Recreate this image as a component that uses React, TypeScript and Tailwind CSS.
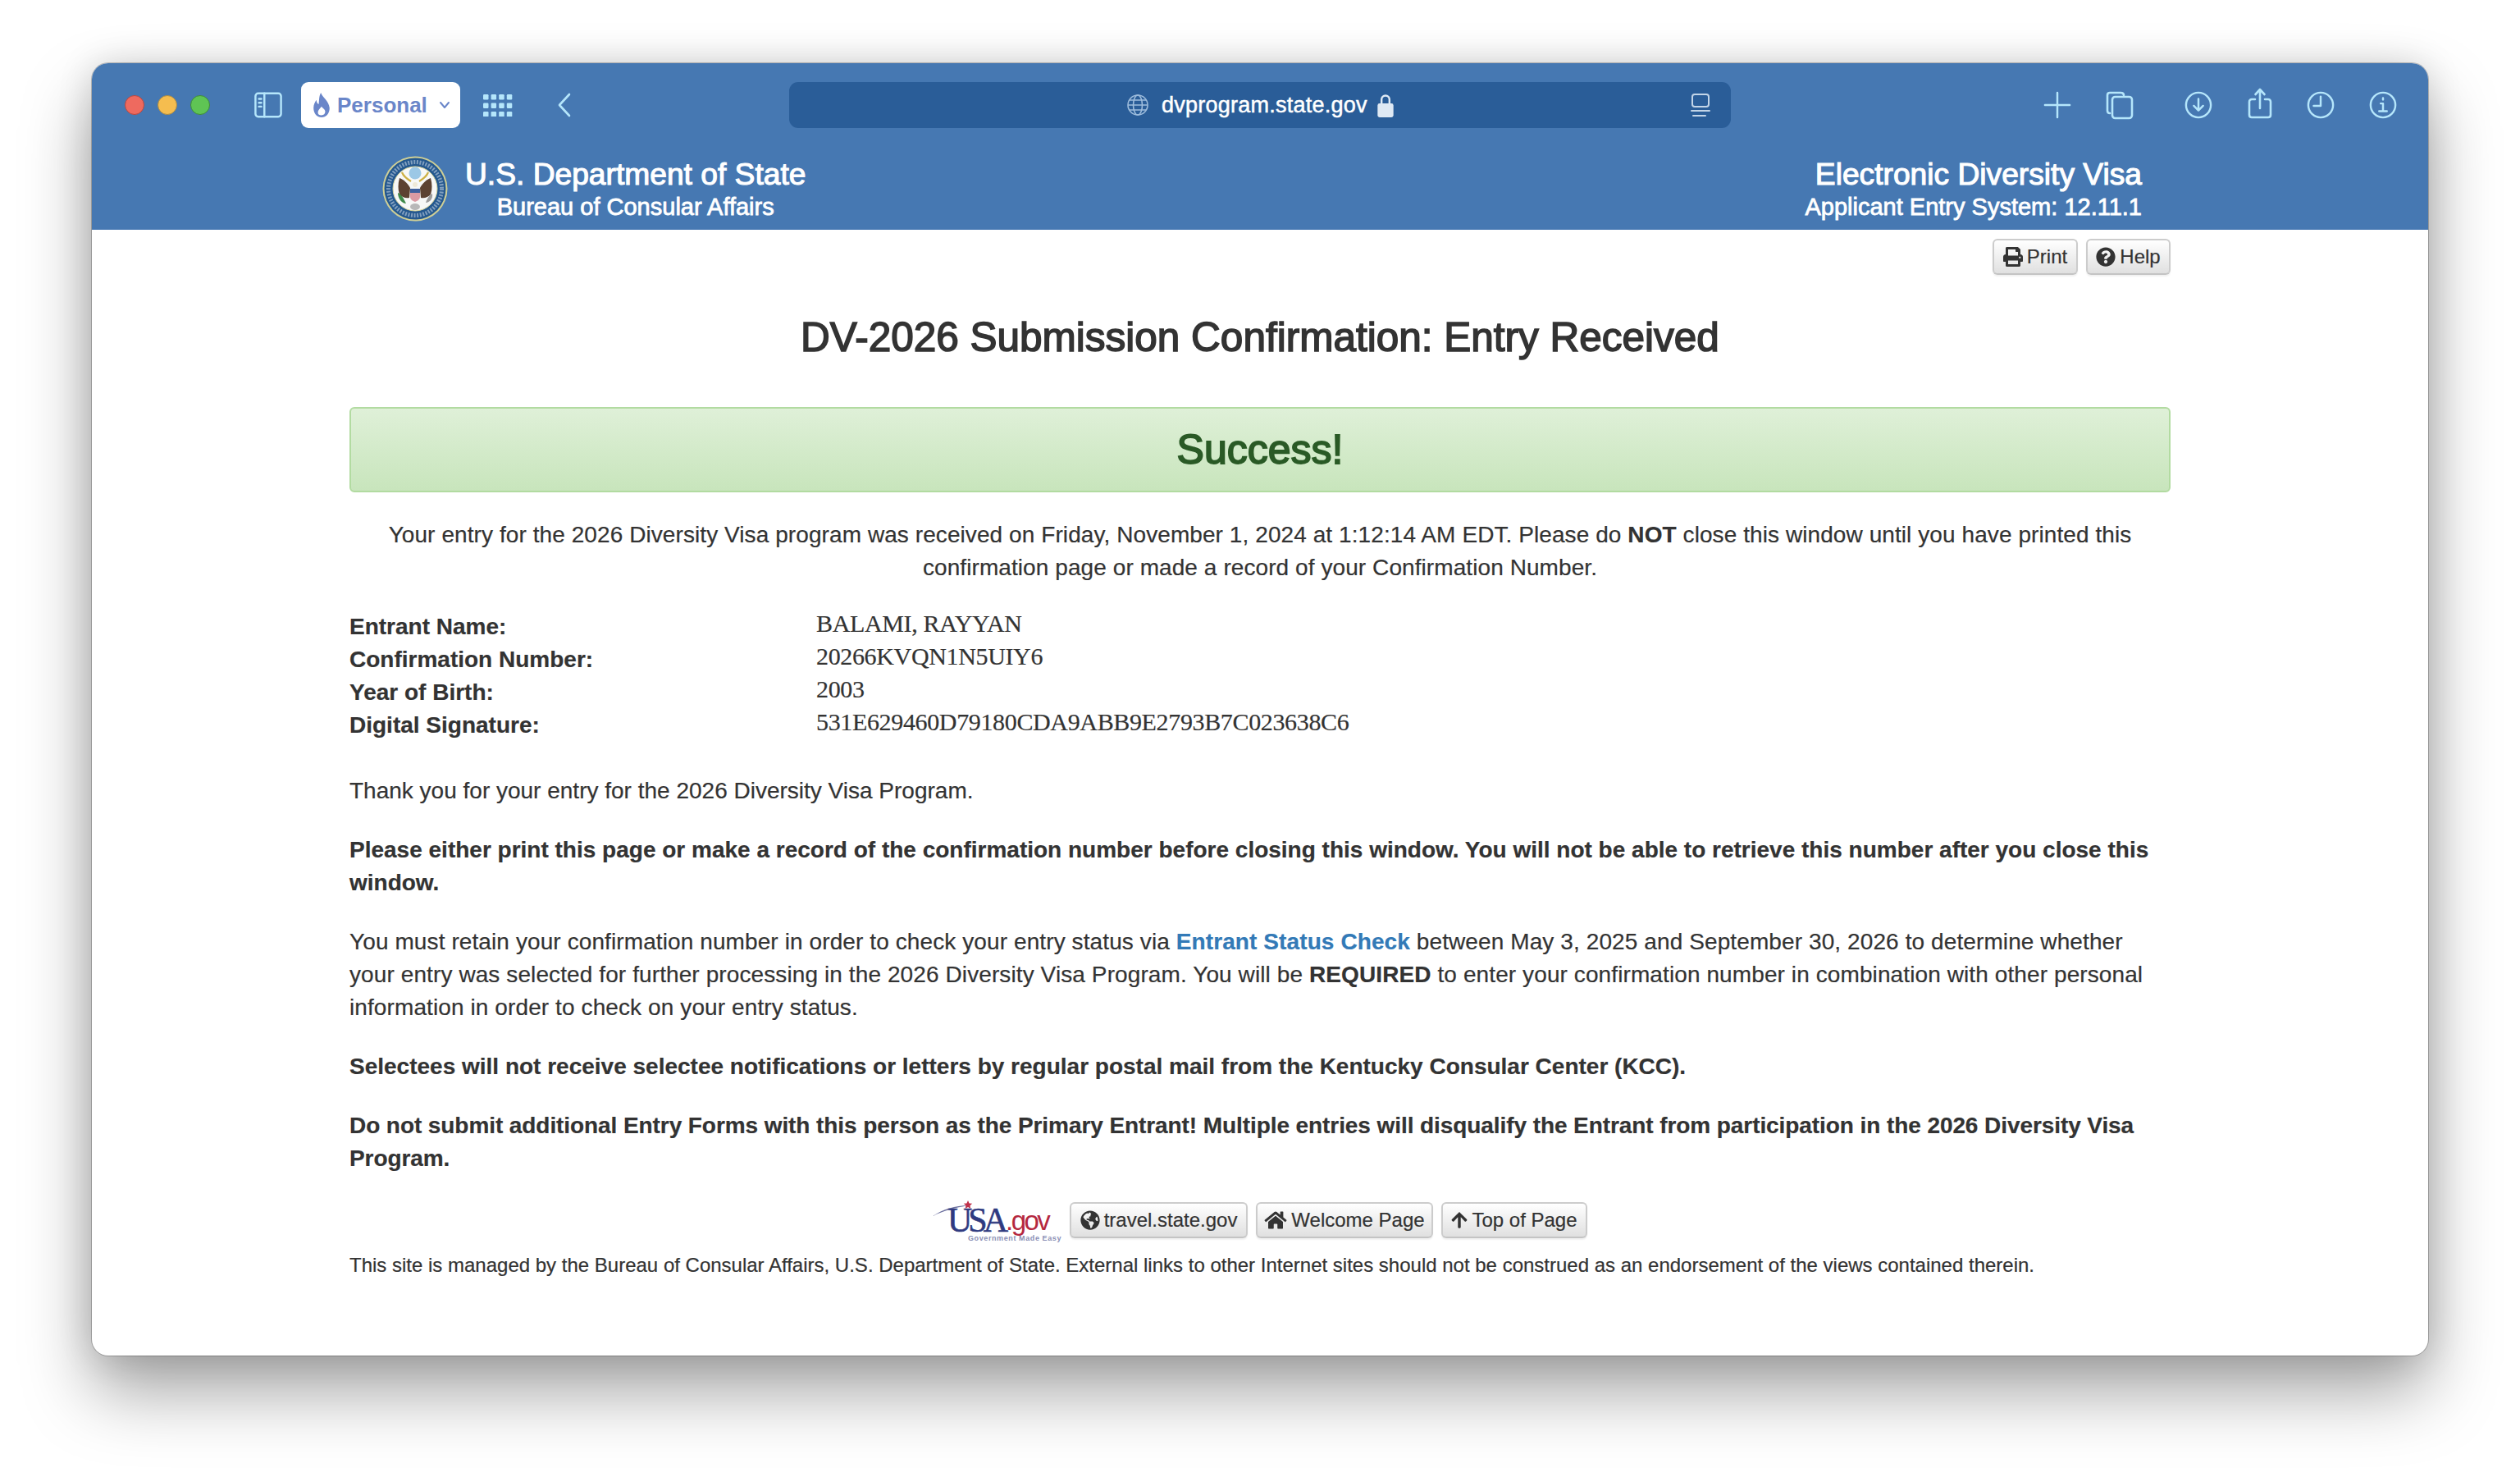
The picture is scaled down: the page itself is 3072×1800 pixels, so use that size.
import { FaPrint, FaQuestionCircle, FaGlobeAmericas, FaHome, FaArrowUp } from 'react-icons/fa';

const iconStroke = '#b5e6fb';

const ToolIcon = ({ children, className }: { children: React.ReactNode; className?: string }) => (
  <svg viewBox="0 0 36 36" fill="none" stroke={iconStroke} strokeWidth="2.6" strokeLinecap="round" strokeLinejoin="round" className={className ?? 'w-[36px] h-[36px]'}>
    {children}
  </svg>
);

const Seal = () => (
  <svg viewBox="0 0 80 80" className="w-[80px] h-[80px] shrink-0">
    <circle cx="40" cy="40" r="39.5" fill="#cfcf96" />
    <circle cx="40" cy="40" r="37.5" fill="#24588f" />
    <circle cx="40" cy="40" r="32.5" fill="none" stroke="#a9bed3" strokeWidth="5" strokeDasharray="2 1.6" opacity="0.7" />
    <circle cx="40" cy="40" r="27" fill="#f7f8f7" stroke="#d8d49a" strokeWidth="1" />
    <circle cx="40" cy="21" r="7.5" fill="#9cc8e6" />
    <path d="M21 27c5 2 9 5 13 12l-1 12c-5 1-9-1-12-4-2-6-2-13 0-20z" fill="#5c4231" />
    <path d="M59 27c-5 2-9 5-13 12l1 12c5 1 9-1 12-4 2-6 2-13 0-20z" fill="#5c4231" />
    <path d="M24 20c2 5 6 8 11 11M56 20c-2 5-6 8-11 11" stroke="#cdb044" strokeWidth="2.2" fill="none" />
    <path d="M34 41h12v9c0 3-3 5-6 6-3-1-6-3-6-6z" fill="#dc9aa3" />
    <rect x="34" y="40" width="12" height="5" fill="#3f5f9c" />
    <circle cx="40" cy="35" r="3" fill="#efe9d8" />
    <path d="M19 45c3 1 7 6 10 13-5 0-10-6-10-13z" fill="#3f8a4a" />
    <path d="M61 46c-3 1-6 5-8 11 4 0 9-4 8-11z" fill="#9c9c9c" />
    <ellipse cx="40" cy="62" rx="6" ry="4" fill="#b8b8b8" />
  </svg>
);

const PageButton = ({ icon, label, className }: { icon: React.ReactNode; label: string; className: string }) => (
  <a className={`flex items-center justify-center gap-[5px] h-[44px] rounded-[6px] border-2 border-[#ccc] border-b-[#c4c4c4] bg-gradient-to-b from-white to-[#e0e0e0] text-[24px] text-[#333] shadow-[0_2px_2px_rgba(0,0,0,0.06)] ${className}`}>
    {icon}
    <span>{label}</span>
  </a>
);

const InfoRow = ({ label, value }: { label: string; value: string }) => (
  <div className="flex h-[40px] items-center">
    <div className="w-[569px] font-bold tracking-normal">{label}</div>
    <div className="font-['Liberation_Serif',serif] text-[30px] tracking-[-0.35px] leading-[40px] -translate-y-[4px]">{value}</div>
  </div>
);

export default function App() {
  return (
    <div className="min-h-[1800px] bg-white pt-[77px] px-[112px] font-['Liberation_Sans',Arial,sans-serif]">
      <div className="w-[2848px] h-[1575px] rounded-[20px] overflow-hidden bg-white shadow-[0_44px_84px_rgba(0,0,0,0.36),0_0_44px_rgba(0,0,0,0.14),0_0_0_1px_rgba(0,0,0,0.22)]">
        {/* Browser toolbar */}
        <div className="h-[203px] bg-[#4678b2] pt-[23px]">
          <div className="flex items-center h-[56px]">
            <div className="flex gap-[16px] ml-[40px]">
              <span className="w-[24px] h-[24px] rounded-full bg-[#ee6a5f] border border-[#b9473f]" />
              <span className="w-[24px] h-[24px] rounded-full bg-[#f5bd4f] border border-[#a98a45]" />
              <span className="w-[24px] h-[24px] rounded-full bg-[#5fc454] border border-[#3f8a3c]" />
            </div>
            <ToolIcon className="w-[40px] h-[34px] ml-[51px]">
              <rect x="1.5" y="3" width="33" height="30" rx="3.5" />
              <path d="M13 3v30M6 10h3M6 15h3M6 20h3" />
            </ToolIcon>
            <div className="flex items-center w-[194px] h-[56px] ml-[20px] rounded-[9px] bg-white pl-[13px] text-[#6a86c9]">
              <svg viewBox="0 0 24 36" className="w-[24px] h-[32px] shrink-0" fill="#6a86c9">
                <path d="M11 1c2 6 11 11 12 21 0 8-5 13-11 13S1 30 1 22c0-5 2-8 4-11 0 3 1 5 3 6 1-5 0-10 3-16zm1 19c-2 3-5 5-5 8 0 3 2 4 5 4s5-2 5-5c0-3-3-4-5-7z" />
              </svg>
              <span className="ml-[7px] text-[26px] font-bold">Personal</span>
              <svg viewBox="0 0 14 10" className="w-[14px] h-[10px] ml-[14px]" fill="none" stroke="#6a86c9" strokeWidth="2" strokeLinecap="round" strokeLinejoin="round">
                <path d="M2 2l5 6 5-6" />
              </svg>
            </div>
            <svg viewBox="0 0 36 28" className="w-[36px] h-[28px] ml-[28px]" fill={iconStroke}>
              {[0, 1, 2].map((r) =>
                [0, 1, 2, 3].map((c) => <rect key={`${r}-${c}`} x={c * 9.6} y={r * 10.5 + 1} width="6.5" height="6.5" rx="1.2" />),
              )}
            </svg>
            <svg viewBox="0 0 18 32" className="w-[18px] h-[32px] ml-[54px]" fill="none" stroke={iconStroke} strokeWidth="2.6" strokeLinecap="round" strokeLinejoin="round">
              <path d="M15 3L3 16l12 13" />
            </svg>
            {/* Address bar */}
            <div className="flex items-center w-[1148px] h-[56px] ml-[265px] rounded-[11px] bg-[#2a5d98] text-white relative">
              <svg viewBox="0 0 28 28" className="w-[28px] h-[28px] ml-[411px]" fill="none" stroke="#9dbcdc" strokeWidth="1.6">
                <circle cx="14" cy="14" r="12" />
                <ellipse cx="14" cy="14" rx="5.5" ry="12" />
                <path d="M2 14h24M4 8h20M4 20h20" />
              </svg>
              <span className="ml-[15px] text-[27px] tracking-[0.25px] [-webkit-text-stroke:0.5px_white]">dvprogram.state.gov</span>
              <svg viewBox="2 2 16 24" className="w-[20px] h-[29px] ml-[12px]" fill="#dfe9f4">
                <path d="M5 12V8a5 5 0 0110 0v4h-2V8a3 3 0 00-6 0v4z" />
                <rect x="2" y="12" width="16" height="14" rx="2" />
              </svg>
              <svg viewBox="0 0 26 30" className="absolute right-[24px] w-[26px] h-[30px]" fill="none" stroke="#c3d5e8" strokeWidth="2" strokeLinecap="round">
                <rect x="3" y="2" width="20" height="15" rx="3" />
                <path d="M2 22h22M4 28h15" />
              </svg>
            </div>
            {/* Right toolbar icons */}
            <div className="flex items-center ml-[381px]">
              <ToolIcon className="w-[34px] h-[34px]"><path d="M18 2v32M2 18h32" /></ToolIcon>
              <ToolIcon className="w-[36px] h-[36px] ml-[41px]">
                <path d="M6 28c-2 0-3-1-3-3V6c0-2 1-3 3-3h13c2 0 4 1 4 3" />
                <rect x="9" y="8" width="24" height="26" rx="3.5" />
              </ToolIcon>
              <ToolIcon className="w-[34px] h-[34px] ml-[61px]">
                <circle cx="18" cy="18" r="16" />
                <path d="M18 10v15M12 19l6 6 6-6" />
              </ToolIcon>
              <svg viewBox="0 0 30 38" className="w-[30px] h-[38px] ml-[43px] -translate-y-[2px]" fill="none" stroke={iconStroke} strokeWidth="2.6" strokeLinecap="round" strokeLinejoin="round">
                <path d="M9 14H5c-1.500 0-3 1-3 3v16c0 2 1.500 3 3 3h20c1.500 0 3-1 3-3V17c0-2-1.500-3-3-3h-4" />
                <path d="M15 25V2M9.500 8L15 2l5.500 6" />
              </svg>
              <ToolIcon className="w-[34px] h-[34px] ml-[42px]">
                <circle cx="18" cy="18" r="16" />
                <path d="M18 7v12h-9" />
              </ToolIcon>
              <ToolIcon className="w-[34px] h-[34px] ml-[42px]">
                <circle cx="18" cy="18" r="16" />
                <path d="M15 16h3v10M13 26h10M18 9v2" />
              </ToolIcon>
            </div>
          </div>

          {/* Site header */}
          <div className="flex justify-between mt-[35px] pl-[354px] pr-[349px] text-white">
            <div className="flex items-center gap-[21px] -mt-[1px]">
              <Seal />
              <div className="flex flex-col items-center">
                <div className="text-[37.2px] leading-[43px] [-webkit-text-stroke:1.1px_white]">U.S. Department of State</div>
                <div className="text-[29px] leading-[36px] [-webkit-text-stroke:0.8px_white]">Bureau of Consular Affairs</div>
              </div>
            </div>
            <div className="flex flex-col items-end">
              <div className="text-[37.2px] leading-[43px] [-webkit-text-stroke:1.1px_white]">Electronic Diversity Visa</div>
              <div className="text-[29px] leading-[36px] [-webkit-text-stroke:0.8px_white]">Applicant Entry System: 12.11.1</div>
            </div>
          </div>
        </div>

        {/* Page content */}
        <div className="mx-[314px] w-[2220px] text-[28px] leading-[40px] text-[#333] tracking-normal [-webkit-text-stroke:0.2px]">
          <div className="flex justify-end gap-[10px] pt-[11px]">
            <PageButton icon={<FaPrint className="w-[24px] h-[24px]" />} label="Print" className="w-[104px]" />
            <PageButton icon={<FaQuestionCircle className="w-[24px] h-[24px]" />} label="Help" className="w-[103px]" />
          </div>

          <h1 className="mt-[46px] text-center text-[49.5px] leading-[60px] [-webkit-text-stroke:1.6px_#333]">
            DV-2026 Submission Confirmation: Entry Received
          </h1>

          <div className="mt-[55px] h-[104px] flex items-center justify-center rounded-[6px] border-2 border-[#b2dba1] bg-gradient-to-b from-[#dff0d8] to-[#c8e5bc] text-[50px] text-[#2a5a26] [-webkit-text-stroke:1.8px_#2a5a26]">
            Success!
          </div>

          <p className="mt-[32px] text-center tracking-[0.08px]">
            Your entry for the 2026 Diversity Visa program was received on Friday, November 1, 2024 at 1:12:14 AM EDT. Please do <b>NOT</b> close this window until you have printed this<br />confirmation page or made a record of your Confirmation Number.
          </p>

          <div className="mt-[32px]">
            <InfoRow label="Entrant Name:" value="BALAMI, RAYYAN" />
            <InfoRow label="Confirmation Number:" value="20266KVQN1N5UIY6" />
            <InfoRow label="Year of Birth:" value="2003" />
            <InfoRow label="Digital Signature:" value="531E629460D79180CDA9ABB9E2793B7C023638C6" />
          </div>

          <p className="mt-[40px]">Thank you for your entry for the 2026 Diversity Visa Program.</p>
          <p className="mt-[32px] font-bold">
            Please either print this page or make a record of the confirmation number before closing this window. You will not be able to retrieve this number after you close this window.
          </p>
          <p className="mt-[32px] tracking-[0.1px]">
            You must retain your confirmation number in order to check your entry status via <a className="font-bold text-[#337ab7]">Entrant Status Check</a> between May 3, 2025 and September 30, 2026 to determine whether<br />your entry was selected for further processing in the 2026 Diversity Visa Program. You will be <b>REQUIRED</b> to enter your confirmation number in combination with other personal<br />information in order to check on your entry status.
          </p>
          <p className="mt-[32px] font-bold">
            Selectees will not receive selectee notifications or letters by regular postal mail from the Kentucky Consular Center (KCC).
          </p>
          <p className="mt-[32px] font-bold tracking-[-0.08px]">
            Do not submit additional Entry Forms with this person as the Primary Entrant! Multiple entries will disqualify the Entrant from participation in the 2026 Diversity Visa Program.
          </p>

          <div className="flex items-center justify-center mt-[32px] h-[46px]">
            {/* USA.gov logo */}
            <div className="relative w-[160px] h-[48px] mr-[7px] shrink-0 [-webkit-text-stroke:0px]">
              <svg viewBox="0 0 160 48" className="absolute inset-0 w-[160px] h-[48px]">
                <path d="M0 19C12 11 28 6 43 6c-15 3-29 6-43 13z" fill="#6b6f9e" />
                <path d="M43 0l1.600 3.400 3.600.4-2.700 2.500.8 3.700-3.300-1.900-3.300 1.900.8-3.700-2.700-2.500 3.600-.4z" fill="#c0304a" />
              </svg>
              <span className="absolute left-[18px] top-[7px] font-['Liberation_Serif',serif] text-[42px] leading-[34px] tracking-[-5px] text-[#2f3a80] [-webkit-text-stroke:0.6px_#2f3a80]">USA</span>
              <span className="absolute left-[89px] top-[9px] text-[33px] leading-[32px] tracking-[-2.5px] text-[#b5283f]">.gov</span>
              <span className="absolute left-[43px] top-[41px] text-[9px] leading-[10px] tracking-[0.6px] font-bold text-[#8a8fb5] whitespace-nowrap">Government Made Easy</span>
            </div>
            <PageButton icon={<FaGlobeAmericas className="w-[24px] h-[24px]" />} label="travel.state.gov" className="w-[217px]" />
            <PageButton icon={<FaHome className="w-[28px] h-[24px]" />} label="Welcome Page" className="w-[216px] ml-[10px]" />
            <PageButton icon={<FaArrowUp className="w-[20px] h-[22px]" />} label="Top of Page" className="w-[178px] ml-[10px]" />
          </div>

          <p className="mt-[15px] text-[24px] leading-[34px]">
            This site is managed by the Bureau of Consular Affairs, U.S. Department of State. External links to other Internet sites should not be construed as an endorsement of the views contained therein.
          </p>
        </div>
      </div>
    </div>
  );
}
